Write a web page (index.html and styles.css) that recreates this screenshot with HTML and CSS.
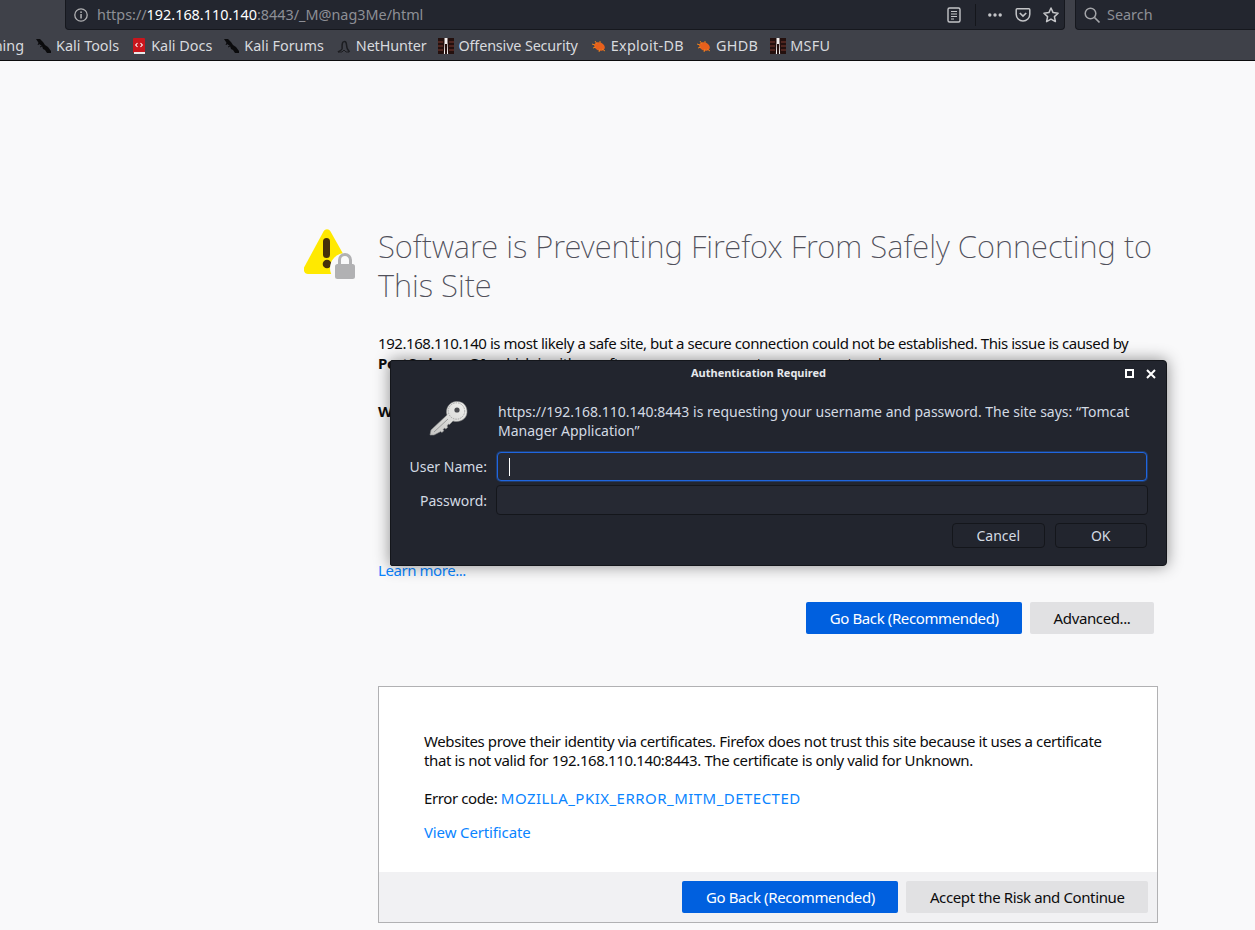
FILE: index.html
```html
<!DOCTYPE html>
<html lang="en">
<head>
    <meta charset="UTF-8">
    <title>Insecure Connection</title>
    <link rel="stylesheet" href="styles.css">
</head>
<body>
    <header class="chrome">
        <div class="navbar">
            <div class="urlbar">
                <svg class="url-info" width="16" height="16" viewBox="0 0 16 16"><circle cx="8" cy="8" r="6.2" fill="none" stroke="#b1b1b3" stroke-width="1.3"/><rect x="7.3" y="7" width="1.5" height="4.5" fill="#b1b1b3"/><rect x="7.3" y="4.4" width="1.5" height="1.6" fill="#b1b1b3"/></svg>
                <span class="url-text">https://<b>192.168.110.140</b>:8443/_M@nag3Me/html</span>
                <div class="url-actions">
                    <svg width="16" height="18" viewBox="0 0 16 18"><rect x="2" y="2" width="12" height="14" rx="1.5" fill="none" stroke="#c4c5c8" stroke-width="1.4"/><path d="M5 5.5h6M5 8h6M5 10.5h6M5 13h3" stroke="#c4c5c8" stroke-width="1.2"/></svg>
                    <span class="url-sep"></span>
                    <svg class="url-dots" width="16" height="16" viewBox="0 0 16 16"><circle cx="2.8" cy="8" r="1.7" fill="#c4c5c8"/><circle cx="8" cy="8" r="1.7" fill="#c4c5c8"/><circle cx="13.2" cy="8" r="1.7" fill="#c4c5c8"/></svg>
                    <svg class="url-pocket" width="16" height="16" viewBox="0 0 16 16"><path d="M2.2 1.8h11.6c.6 0 1 .4 1 1v4.4c0 3.6-3 6.8-6.8 6.8S1.200 10.800 1.200 7.200V2.800c0-.6.4-1 1-1z" fill="none" stroke="#c4c5c8" stroke-width="1.5"/><path d="M4.800 6l3.200 3.100L11.200 6" fill="none" stroke="#c4c5c8" stroke-width="1.700"/></svg>
                    <svg class="url-star" width="18" height="18" viewBox="0 0 18 18"><path d="M9 2l2.100 4.600 5 .6-3.700 3.400 1 5L9 13.100l-4.400 2.500 1-5L1.900 7.200l5-.6z" fill="none" stroke="#c4c5c8" stroke-width="1.500" stroke-linejoin="round"/></svg>
                </div>
            </div>
            <div class="searchbar">
                <svg width="18" height="18" viewBox="0 0 18 18"><circle cx="7.500" cy="7.500" r="5.300" fill="none" stroke="#a4a5a9" stroke-width="1.500"/><path d="M11.500 11.500l5 5" stroke="#a4a5a9" stroke-width="1.700"/></svg>
                <span>Search</span>
            </div>
        </div>
        <nav class="bookmarks">
            <a class="bookmark bookmark-cut">Kali Training</a>
            <a class="bookmark"><svg class="fav" viewBox="0 0 16 16"><path d="M0 1l4 0 3 3 2 3 3 2 3 4v2h-4l-2-3-2-1-1-3-3-2-1-2z" fill="#0b0b0d"/><path d="M3 5l-1 2M6 8l-2 1" stroke="#0b0b0d"/></svg>Kali Tools</a>
            <a class="bookmark"><svg class="fav" viewBox="0 0 16 16"><rect x="2" y="0" width="12" height="15" rx="1" fill="#c9161d"/><rect x="3" y="14" width="11" height="2" fill="#e8e8e8"/><path d="M6.500 5L4.700 7l1.800 2M9.500 5l1.800 2-1.800 2" stroke="#fff" fill="none" stroke-width="1.100"/></svg>Kali Docs</a>
            <a class="bookmark"><svg class="fav" viewBox="0 0 16 16"><path d="M0 1l4 0 3 3 2 3 3 2 3 4v2h-4l-2-3-2-1-1-3-3-2-1-2z" fill="#0b0b0d"/><path d="M3 5l-1 2M6 8l-2 1" stroke="#0b0b0d"/></svg>Kali Forums</a>
            <a class="bookmark bookmark-tight"><svg class="fav" viewBox="0 0 16 16"><path d="M2 14c1-1 3-1 4-3 .5-2-.5-3 .5-6C7 3.500 9 3 10 4.500c.8 2 .5 5 1.500 6.500l2 3" fill="none" stroke="#1c1d21" stroke-width="1.500"/><path d="M2 14h4l2-2 2 2h3" fill="none" stroke="#1c1d21"/></svg>NetHunter</a>
            <a class="bookmark bookmark-tight"><svg class="fav" viewBox="0 0 16 16"><rect width="16" height="16" fill="#24100e"/><path d="M0 4h5M0 8h5M0 12h5M11 4h5M11 8h5M11 12h5" stroke="#7a3a30" stroke-width="1"/><path d="M6.500 0h3v4l.6 12H9V6H7v10H5.900l.6-12z" fill="#f2eeee"/></svg>Offensive Security</a>
            <a class="bookmark bookmark-wide bookmark-after"><svg class="fav" viewBox="0 0 16 16"><ellipse cx="8.500" cy="8.500" rx="5.600" ry="4" transform="rotate(25 8.500 8.500)" fill="#e8601c"/><path d="M1 6l3 1M4 3l2 3M9 3v2M2 10l3-1M14 13l-3-2M8 14l1-3" stroke="#e8801c" stroke-width="1"/></svg>Exploit-DB</a>
            <a class="bookmark bookmark-wide"><svg class="fav" viewBox="0 0 16 16"><ellipse cx="8.500" cy="8.500" rx="5.600" ry="4" transform="rotate(25 8.500 8.500)" fill="#e8601c"/><path d="M1 6l3 1M4 3l2 3M9 3v2M2 10l3-1M14 13l-3-2M8 14l1-3" stroke="#e8801c" stroke-width="1"/></svg>GHDB</a>
            <a class="bookmark bookmark-wide"><svg class="fav" viewBox="0 0 16 16"><rect width="16" height="16" fill="#24100e"/><path d="M0 4h5M0 8h5M0 12h5M11 4h5M11 8h5M11 12h5" stroke="#7a3a30" stroke-width="1"/><path d="M6.500 0h3v4l.6 12H9V6H7v10H5.900l.6-12z" fill="#f2eeee"/></svg>MSFU</a>
        </nav>
    </header>

    <main class="page">
        <div class="error-head">
            <svg class="error-icon" width="54" height="52" viewBox="0 0 54 52">
                <path d="M19.500 3.500c1.700-3 5.300-3 7 0l20 35.500c1.600 3.200-.4 7-3.600 7H4c-3.300 0-5.300-3.800-3.700-7z" fill="#ffe900"/>
                <rect x="19" y="10" width="7" height="20" rx="3.500" fill="#45300a"/>
                <circle cx="23" cy="36" r="4.300" fill="#45300a"/>
                <circle cx="41" cy="40" r="15" fill="#f9f9fa"/>
                <path d="M35.500 36v-4a5.500 5.500 0 0 1 11 0v4" fill="none" stroke="#b1b1b3" stroke-width="3"/>
                <rect x="31" y="36" width="20" height="15" rx="2.500" fill="#b1b1b3"/>
            </svg>
            <h1>Software is Preventing Firefox From Safely Connecting to This Site</h1>
        </div>
        <div class="content">
            <p class="intro">192.168.110.140 is most likely a safe site, but a secure connection could not be established. This issue is caused by <b>PortSwigger CA</b>, which is either software on your computer or your network.</p>
            <p class="what"><b>What can you do about it?</b></p>
            <a class="learn">Learn more...</a>
            <div class="actions">
                <button class="btn btn-primary">Go Back (Recommended)</button>
                <button class="btn">Advanced...</button>
            </div>
            <section class="advanced">
                <div class="advanced-body">
                    <p>Websites prove their identity via certificates. Firefox does not trust this site because it uses a certificate that is not valid for 192.168.110.140:8443. The certificate is only valid for Unknown.</p>
                    <p class="code">Error code: <a class="code-link">MOZILLA_PKIX_ERROR_MITM_DETECTED</a></p>
                    <a class="cert-link">View Certificate</a>
                </div>
                <div class="advanced-foot">
                    <button class="btn btn-primary">Go Back (Recommended)</button>
                    <button class="btn btn-accept">Accept the Risk and Continue</button>
                </div>
            </section>
        </div>
    </main>

    <div class="dialog">
        <div class="dialog-title">
            <span>Authentication Required</span>
            <svg class="win-max" width="9" height="9" viewBox="0 0 9 9"><rect x="1" y="1" width="7" height="7" fill="none" stroke="#fff" stroke-width="2"/></svg>
            <svg class="win-close" width="10" height="10" viewBox="0 0 10 10"><path d="M1 1l8 8M9 1l-8 8" stroke="#fff" stroke-width="2"/></svg>
        </div>
        <div class="dialog-msg">
            <svg class="key" width="40" height="38" viewBox="0 0 40 38">
                <defs><linearGradient id="keyfill" x1="0" y1="1" x2="1" y2="0"><stop offset="0" stop-color="#c4c4c2"/><stop offset="1" stop-color="#f2f2f0"/></linearGradient></defs>
                <path d="M2 30L18 15c-2-6 2-13 9-13.500C34 1 38.500 6 38 12.500 37.500 19 31 23 24 21l-3.500 3.500-1-.5-1.500 2 .8 1.200-2 1.800-1.200-1-1.500 1.500.8 1.200-2 1.800-1.200-1L5 35H1z" fill="url(#keyfill)" stroke="#8a8b8c" stroke-width=".6"/>
                <circle cx="27.500" cy="11" r="8.200" fill="none" stroke="#a3a3a3" stroke-width="1" stroke-dasharray="1.500 1"/>
                <circle cx="28" cy="10" r="2.600" fill="#4a4b4f"/>
                <path d="M5 32L19 19" stroke="#9a9a9a"/>
            </svg>
            <p>https://192.168.110.140:8443 is requesting your username and password. The site says: “Tomcat Manager Application”</p>
        </div>
        <div class="dialog-form">
            <label>User Name:</label>
            <div class="field field-focus"><span class="caret"></span></div>
            <label>Password:</label>
            <div class="field"></div>
        </div>
        <div class="dialog-buttons">
            <button class="dlg-btn">Cancel</button>
            <button class="dlg-btn">OK</button>
        </div>
    </div>
</body>
</html>
```

FILE: styles.css
```css
* {
    box-sizing: border-box;
}
html, body {
    height: 100%;
}
body {
    margin: 0;
    background: #f9f9fa;
    color: #0c0c0d;
    font-family: 'Noto Sans', sans-serif;
    font-size: 15px;
    overflow: hidden;
    position: relative;
}
.chrome {
    background: #3f4149;
    border-bottom: 1px solid #0c0c0d;
    height: 61px;
    color: #d8dade;
}
.navbar {
    display: flex;
    height: 31px;
    padding: 0 0 0 65px;
}
.urlbar {
    width: 1000px;
    height: 30px;
    background: #23262f;
    border: 1px solid #16181e;
    border-top: none;
    border-radius: 0 0 4px 4px;
    display: flex;
    align-items: center;
    padding: 0 4px 0 7px;
}
.url-text {
    margin-left: 8px;
    color: #8d8f96;
    font-size: 14.4px;
}
.url-text b {
    color: #ffffff;
    font-weight: 400;
}
.url-actions {
    margin-left: auto;
    display: flex;
    align-items: center;
}
.url-sep {
    width: 1px;
    height: 22px;
    background: #14161b;
    margin: 0 11px 0 13px;
}
.url-pocket {
    margin-left: 12px;
}
.url-star {
    margin-left: 11px;
}
.searchbar {
    margin-left: 10px;
    flex: 1;
    height: 30px;
    background: #23262f;
    border: 1px solid #16181e;
    border-top: none;
    border-right: none;
    border-radius: 0 0 0 4px;
    display: flex;
    align-items: center;
    padding-left: 7px;
    color: #8d8f96;
    font-size: 14.4px;
    gap: 6px;
}
.bookmarks {
    height: 29px;
    display: flex;
    align-items: center;
    font-size: 14.4px;
    gap: 12px;
}
.bookmark {
    display: flex;
    align-items: center;
    gap: 4px;
    white-space: nowrap;
    flex: none;
}
.bookmark-cut {
    width: 24px;
    justify-content: flex-end;
    overflow: hidden;
}
.bookmark-tight {
    letter-spacing: -0.15px;
}
.bookmark-wide {
    letter-spacing: 0.3px;
}
.bookmark-after {
    margin-left: 1px;
}
.fav {
    width: 16px;
    height: 16px;
    flex: none;
}
.page {
    padding: 166px 97px 0 304px;
}
.error-head {
    display: flex;
    gap: 20px;
}
.error-icon {
    flex: none;
    margin-top: 1px;
}
h1 {
    margin: 0;
    font-family: 'Noto Sans', sans-serif;
    font-weight: 200;
    font-size: 31px;
    line-height: 39px;
    color: #50505a;
}
.content {
    margin-left: 74px;
    width: 780px;
    letter-spacing: -0.44px;
}
.content a {
    color: #0a84ff;
}
.content .code-link {
    letter-spacing: 0.47px;
}
.content .cert-link {
    letter-spacing: -0.13px;
}
.intro {
    margin: 28px 0 0;
    line-height: 20px;
}
.what {
    margin: 28px 0 0;
    line-height: 20px;
}
.learn {
    display: block;
    margin-top: 139px;
    line-height: 20px;
}
.actions {
    display: flex;
    justify-content: flex-end;
    gap: 8px;
    margin: 22px 4px 0 0;
}
.btn {
    height: 32px;
    padding: 0 23.5px;
    border: none;
    border-radius: 2px;
    background: #e1e1e3;
    color: #0c0c0d;
    font-family: inherit;
    font-size: 15px;
    letter-spacing: -0.38px;
}
.btn-primary {
    background: #0060df;
    color: #ffffff;
}
.advanced {
    margin-top: 52px;
    height: 237px;
    background: #ffffff;
    border: 1px solid #b1b1b3;
    display: flex;
    flex-direction: column;
}
.advanced-body {
    flex: 1;
    padding: 45px 45px 0;
    line-height: 19px;
    letter-spacing: -0.39px;
}
.advanced-body p {
    margin: 0;
}
.advanced-body .code {
    margin: 19px 0 15px;
}
.advanced-foot {
    height: 50px;
    background: #f1f1f3;
    display: flex;
    justify-content: flex-end;
    align-items: center;
    gap: 8px;
    padding-right: 9px;
}
.dialog {
    position: absolute;
    left: 390px;
    top: 360px;
    width: 777px;
    height: 206px;
    background: #22252e;
    border: 1px solid #14161b;
    border-radius: 2px 4px 4px 2px;
    box-shadow: 0 0 16px rgba(0, 0, 0, 0.45);
    color: #d3dae3;
    font-size: 14px;
}
.dialog-title {
    position: relative;
    height: 23px;
    padding-right: 40px;
    display: flex;
    justify-content: center;
    align-items: center;
    color: #e6e8ec;
    font-size: 11px;
    font-weight: 700;
}
.win-max {
    position: absolute;
    left: 734px;
    top: 8px;
}
.win-close {
    position: absolute;
    left: 755px;
    top: 8px;
}
.dialog-msg {
    display: flex;
    padding: 18px 30px 0 38px;
    gap: 29px;
}
.key {
    flex: none;
    margin-top: -2px;
}
.dialog-msg p {
    margin: 0;
    line-height: 19px;
}
.dialog-form {
    display: grid;
    grid-template-columns: 96px 1fr;
    gap: 4px 9px;
    align-items: center;
    padding-right: 18px;
    margin-top: 12px;
}
.dialog-form label {
    text-align: right;
}
.field {
    height: 30px;
    background: #262933;
    border: 1px solid #14161b;
    border-radius: 4px;
    display: flex;
    align-items: center;
}
.field-focus {
    height: 29px;
    margin: 0 1px;
    border-color: #1f66e0;
    box-shadow: 0 0 0 1px rgba(31, 102, 224, 0.35);
}
.caret {
    width: 1px;
    height: 18px;
    background: #ffffff;
    margin-left: 11px;
}
.dialog-buttons {
    display: flex;
    justify-content: flex-end;
    gap: 10px;
    padding-right: 19px;
    margin-top: 8px;
}
.dlg-btn {
    width: 92.5px;
    height: 25px;
    background: #22252e;
    border: 1px solid #14161b;
    border-radius: 4px;
    color: #d3dae3;
    font-family: inherit;
    font-size: 14px;
    padding: 0;
}
```
